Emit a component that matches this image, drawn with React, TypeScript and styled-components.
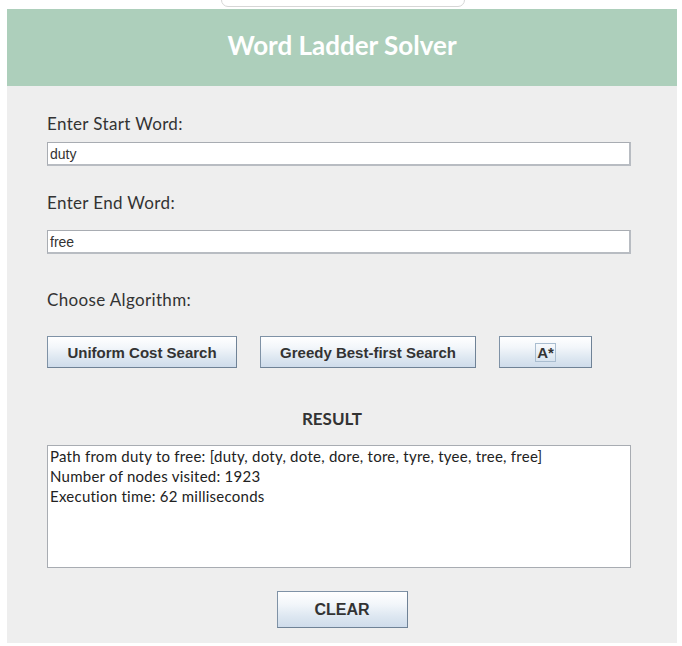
import React from "react";
import styled, { createGlobalStyle } from "styled-components";

const Global = createGlobalStyle`
  html, body { margin: 0; padding: 0; background: #ffffff; }
  body { width: 682px; height: 646px; overflow: hidden; position: relative; }
  * { box-sizing: border-box; }
`;

const Page = styled.div`
  position: relative;
  width: 682px;
  height: 646px;
  padding: 9px 5px 3px 7px;
`;

const TopTab = styled.div`
  position: absolute;
  left: 221px;
  top: -12px;
  width: 244px;
  height: 19px;
  border: 1px solid #d6d6d6;
  border-radius: 0 0 7px 7px;
  background: #ffffff;
`;

const Panel = styled.div`
  display: flex;
  flex-direction: column;
  width: 670px;
  height: 634px;
  background: #eeeeee;
`;

const Header = styled.div`
  height: 77px;
  background: #adcfbb;
  display: flex;
  align-items: center;
  justify-content: center;
  padding-bottom: 6px;
  color: #ffffff;
  font-family: Lato, "Open Sans", sans-serif;
  font-weight: 700;
  font-size: 26px;
`;

const Body = styled.div`
  display: flex;
  flex-direction: column;
  padding: 0 0 0 40px;
`;

const Label = styled.div<{ $top: number }>`
  margin-top: ${(p) => p.$top}px;
  height: 20px;
  line-height: 20px;
  font-family: Lato, "Open Sans", sans-serif;
  font-size: 17px;
  letter-spacing: 0.35px;
  color: #333333;
`;

const Field = styled.div<{ $top: number }>`
  margin-top: ${(p) => p.$top}px;
  width: 584px;
  height: 24px;
  background: #ffffff;
  border-top: 1px solid #a8acb2;
  border-left: 1px solid #a8acb2;
  border-right: 2px solid #b8bcc2;
  border-bottom: 2px solid #b8bcc2;
  padding: 2px 2px;
  font-family: "Liberation Sans", Arial, sans-serif;
  font-size: 14px;
  line-height: 18px;
  color: #333333;
`;

const ButtonRow = styled.div`
  margin-top: 26px;
  display: flex;
  gap: 23px;
`;

const SwingButton = styled.button<{ $w: number; $h: number; $fs: number }>`
  width: ${(p) => p.$w}px;
  height: ${(p) => p.$h}px;
  padding: 0;
  border: 1px solid #7f92a6;
  border-bottom-color: #6f8296;
  border-right-color: #6f8296;
  background: linear-gradient(#ffffff 0%, #f2f6fa 35%, #dde7f1 70%, #cfdceb 100%);
  font-family: "Liberation Sans", Arial, sans-serif;
  font-weight: 700;
  font-size: ${(p) => p.$fs}px;
  color: #333333;
  display: flex;
  align-items: center;
  justify-content: center;
  cursor: pointer;
`;

const FocusMark = styled.span`
  border: 1px solid #a9bdd0;
  padding: 0 1px;
  line-height: 17px;
`;

const ResultTitle = styled.div`
  margin-top: 41px;
  width: 584px;
  text-align: center;
  font-family: Lato, "Open Sans", sans-serif;
  font-weight: 700;
  font-size: 17px;
  line-height: 20px;
  color: #333333;
  padding-right: 14px;
`;

const ResultBox = styled.div`
  margin-top: 16px;
  width: 584px;
  height: 123px;
  background: #ffffff;
  border: 1px solid #a8acb2;
  padding: 0 2px;
  font-family: Lato, "Open Sans", sans-serif;
  font-size: 15px;
  letter-spacing: 0.25px;
  line-height: 20px;
  color: #222222;
`;

const Footer = styled.div`
  margin-top: 23px;
  width: 584px;
  display: flex;
  justify-content: center;
  padding-left: 6px;
`;

export default function App() {
  return (
    <Page>
      <Global />
      <TopTab />
      <Panel>
        <Header>Word Ladder Solver</Header>
        <Body>
          <Label $top={28}>Enter Start Word:</Label>
          <Field $top={8}>duty</Field>
          <Label $top={27}>Enter End Word:</Label>
          <Field $top={17}>free</Field>
          <Label $top={36}>Choose Algorithm:</Label>
          <ButtonRow>
            <SwingButton $w={190} $h={32} $fs={15}>Uniform Cost Search</SwingButton>
            <SwingButton $w={216} $h={32} $fs={15}>Greedy Best-first Search</SwingButton>
            <SwingButton $w={93} $h={32} $fs={15}><FocusMark>A*</FocusMark></SwingButton>
          </ButtonRow>
          <ResultTitle>RESULT</ResultTitle>
          <ResultBox>
            <div>Path from duty to free: [duty, doty, dote, dore, tore, tyre, tyee, tree, free]</div>
            <div>Number of nodes visited: 1923</div>
            <div>Execution time: 62 milliseconds</div>
          </ResultBox>
          <Footer>
            <SwingButton $w={131} $h={37} $fs={16}>CLEAR</SwingButton>
          </Footer>
        </Body>
      </Panel>
    </Page>
  );
}
